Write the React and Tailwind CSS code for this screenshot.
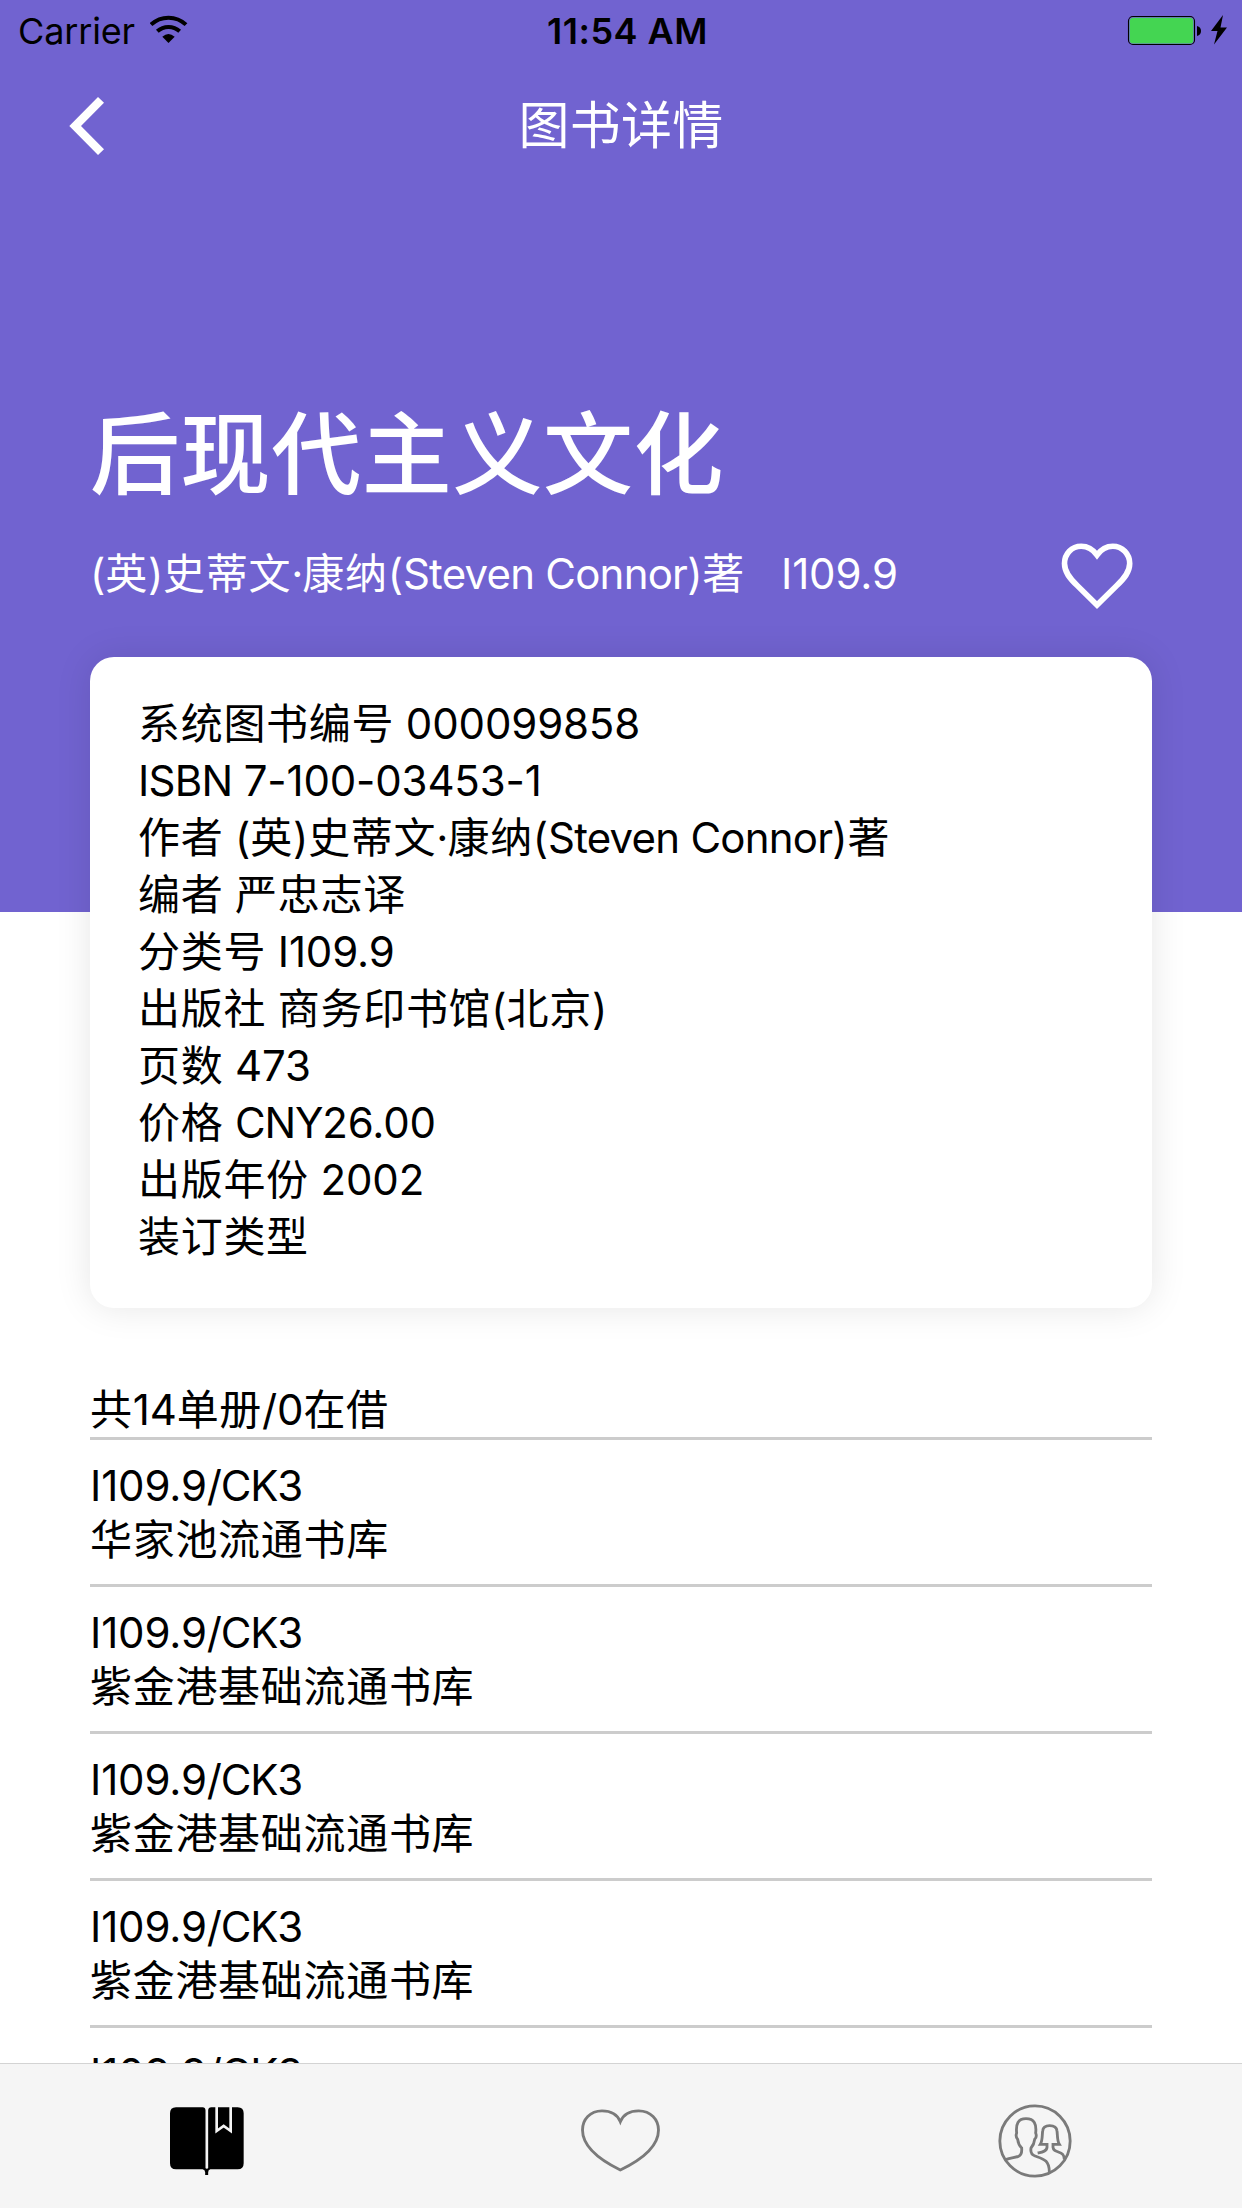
import React from "react";

const HAN = /^[\u3400-\u9fff]/;
const LABEL = /^[A-Z]+ $/;
const CAPS = /^[A-Z/]{2}/;
const WORD = /^[A-Z][a-z]/;
const RUNS = /([\u3400-\u9fff]+|[A-Z][a-z]+(?: [A-Z][a-z]+)*|[A-Z/]{2,} ?|·)/;

function trackingFor(run) {
  if (HAN.test(run)) return "tracking-[0.7px]";
  if (run === "·") return "tracking-[-0.9px]";
  if (WORD.test(run)) return "tracking-[-0.78px]";
  if (LABEL.test(run)) return "tracking-[-0.7px]";
  if (CAPS.test(run)) return "tracking-[-1.2px]";
  return "tracking-[-0.15px]";
}

// Splits a string into Han, word, capital and digit runs, each with its own tracking.
function Mixed({ children }) {
  return children
    .split(RUNS)
    .filter(Boolean)
    .map((run, i) => (
      <span key={i} className={trackingFor(run)}>
        {run}
      </span>
    ));
}

const details = [
  "系统图书编号 000099858",
  "ISBN 7-100-03453-1",
  "作者 (英)史蒂文·康纳(Steven Connor)著",
  "编者 严忠志译",
  "分类号 I109.9",
  "出版社 商务印书馆(北京)",
  "页数 473",
  "价格 CNY26.00",
  "出版年份 2002",
  "装订类型",
];

const copies = [
  { call: "I109.9/CK3", place: "华家池流通书库" },
  { call: "I109.9/CK3", place: "紫金港基础流通书库" },
  { call: "I109.9/CK3", place: "紫金港基础流通书库" },
  { call: "I109.9/CK3", place: "紫金港基础流通书库" },
  { call: "I109.9/CK3", place: "紫金港基础流通书库" },
];

function StatusBar() {
  return (
    <div className="grid h-[60px] grid-cols-3 items-start text-[36px] leading-[62px] text-black">
      <div className="flex pl-[18px]">
        <span className="tracking-[-0.15px]">Carrier</span>
        <svg className="mt-[15px] ml-[15px] h-[28px] w-[38px]" viewBox="450 45 114 84">
          <path d="M453 74 A76 76 0 0 1 558 74" fill="none" stroke="#000" strokeWidth="12" />
          <path d="M472 94 A49 49 0 0 1 539 94" fill="none" stroke="#000" strokeWidth="12" />
          <path d="M487 110 Q505 94 524 110 L505.500 129 Z" />
        </svg>
      </div>
      <div className="pl-[13px] text-center font-semibold tracking-[0.5px]">11:54 AM</div>
      <div className="flex justify-end pt-[15px] pr-[14px]">
        <svg className="h-[31px] w-[101px]" viewBox="1127 15 101 31">
          <rect x="1128.500" y="16.500" width="66" height="28" rx="4.500" fill="none" stroke="#000" strokeWidth="1.100" />
          <rect x="1129.700" y="17.700" width="63.600" height="25.800" rx="3.500" fill="#44d552" />
          <path d="M1197 26 Q1201 27 1201 31 Q1201 35 1197 36 Z" />
          <path d="M1223 15 L1211 31 H1217.500 L1214 44.500 L1227 27.500 H1220.500 Z" />
        </svg>
      </div>
    </div>
  );
}

function NavBar() {
  return (
    <div className="grid h-[132px] grid-cols-3 items-center">
      <svg className="ml-[69px] h-[58px] w-[36px]" viewBox="69 97 36 58">
        <path d="M98 97 L104 102.800 L81 126 L104 149.200 L98 155 L69.300 126 Z" fill="#fff" />
      </svg>
      <h1 className="text-center text-[51px] leading-[60px] font-normal tracking-[0.3px] text-white">图书详情</h1>
    </div>
  );
}

function TabBar() {
  return (
    <nav className="grid h-[145px] grid-cols-3 justify-items-center border-t border-[#d3d3d3] bg-[#f5f5f5]">
      <svg className="mt-[43px] h-[68px] w-[74px]" viewBox="510 291 222 204">
        <path d="M528 292 H608 Q616 292 616.500 301 V474 Q617 476 620.500 476 Q624 476 624.500 474 V301 Q625 292 634 292 H713 Q731 292 731 310 V460 Q731 478 713 478 H631 Q624.500 480 624.500 487 V495 H615.500 V487 Q615 480 608 478 H528 Q510 478 510 460 V310 Q510 292 528 292 Z" />
        <path d="M650 291 V363 L671 348 L692 363 V291" fill="none" stroke="#f5f5f5" strokeWidth="8" />
      </svg>
      <svg className="mt-[45px] h-[64px] w-[80px]" viewBox="123 149 240 192">
        <path
          d="M241 187 C232 165 211 154.500 186 154.500 C150 154.500 127.500 180 127.500 212 C127.500 264 186 305 241 332 C297 305 355.500 264 355.500 212 C355.500 180 332 154.500 296 154.500 C271 154.500 250 165 241 187 Z"
          fill="none"
          stroke="#7a7a7a"
          strokeWidth="8.500"
        />
      </svg>
      <svg className="mt-[40px] h-[74px] w-[74px]" viewBox="113 132 222 222" fill="none" stroke="#7a7a7a" strokeWidth="8.500">
        <circle cx="224" cy="243" r="105.500" />
        <path d="M136 299 C150 293 163 293 174 289 C184 285 185 276 184 264 C176 256 173 247 172 238 C167 232 166 226 169 219 C166 192 173 176 197 176 C222 176 229 192 226 219 C229 226 228 233 223 238 C222 248 218 257 212 264 C210 276 213 284 224 288 C249 297 268 300 267 339" />
        <path d="M232 279 C246 276 259 274 260 262 V253 H240 C247 242 245 226 247 213 C248 202 256 197 268 197 C281 197 289 202 290 213 C292 226 290 242 297 253 H278 V262 C279 271 285 273 294 276 C306 280 311 284 312 298" />
      </svg>
    </nav>
  );
}

export default function App() {
  return (
    <div className="flex h-[2208px] w-[1242px] flex-col overflow-hidden bg-white font-['Inter','Noto_Sans_CJK_SC',sans-serif] text-[42px] text-black">
      <main className="h-[2063px] overflow-hidden">
        <header className="h-[912px] bg-[#7163d0]">
          <StatusBar />
          <NavBar />
          <div className="px-[90px] pt-[197px] text-white">
            <h2 className="text-[90px] leading-[132px] font-medium tracking-[0.6px]">后现代主义文化</h2>
            <div className="mt-[15px] flex h-[75px] items-center justify-between pr-[18px]">
              <p className="leading-[60px] whitespace-pre">
                <Mixed>(英)史蒂文·康纳(Steven Connor)著</Mixed>
                <span className="ml-[36px] tracking-[-0.15px]">I109.9</span>
              </p>
              <svg className="mt-[4px] h-[68px] w-[74px]" viewBox="1060.300 542 74 68">
                <path
                  d="M1097.300 555 C1093 549 1087.500 546.200 1081.500 546.200 C1072 546.200 1064.800 554 1064.800 563.500 C1064.800 572 1070 578.500 1078 586 L1097.300 605 L1116.600 586 C1124.600 578.500 1130 572 1130 563.500 C1130 554 1122.600 546.200 1113.100 546.200 C1107.100 546.200 1101.600 549 1097.300 555 Z"
                  fill="none"
                  stroke="#fff"
                  strokeWidth="5.600"
                />
              </svg>
            </div>
          </div>
        </header>

        <section className="relative mx-[90px] -mt-[255px] h-[651px] rounded-[24px] bg-white pt-[38px] pl-[48px] shadow-[0_0_36px_rgba(0,0,0,0.1)]">
          {details.map((line) => (
            <p key={line} className="h-[57px] leading-[57px] whitespace-pre">
              <Mixed>{line}</Mixed>
            </p>
          ))}
        </section>

        <section className="mx-[90px] mt-[73px]">
          <h3 className="h-[59px] border-b-[3px] border-[#ccc] leading-[57px]">
            <Mixed>共14单册/0在借</Mixed>
          </h3>
          <ul>
            {copies.map((copy, i) => (
              <li key={i} className="h-[147px] border-b-[3px] border-[#ccc] pt-[21px]">
                <p className="leading-[50px]">
                  <Mixed>{copy.call}</Mixed>
                </p>
                <p className="leading-[58px]">
                  <Mixed>{copy.place}</Mixed>
                </p>
              </li>
            ))}
          </ul>
        </section>
      </main>
      <TabBar />
    </div>
  );
}
